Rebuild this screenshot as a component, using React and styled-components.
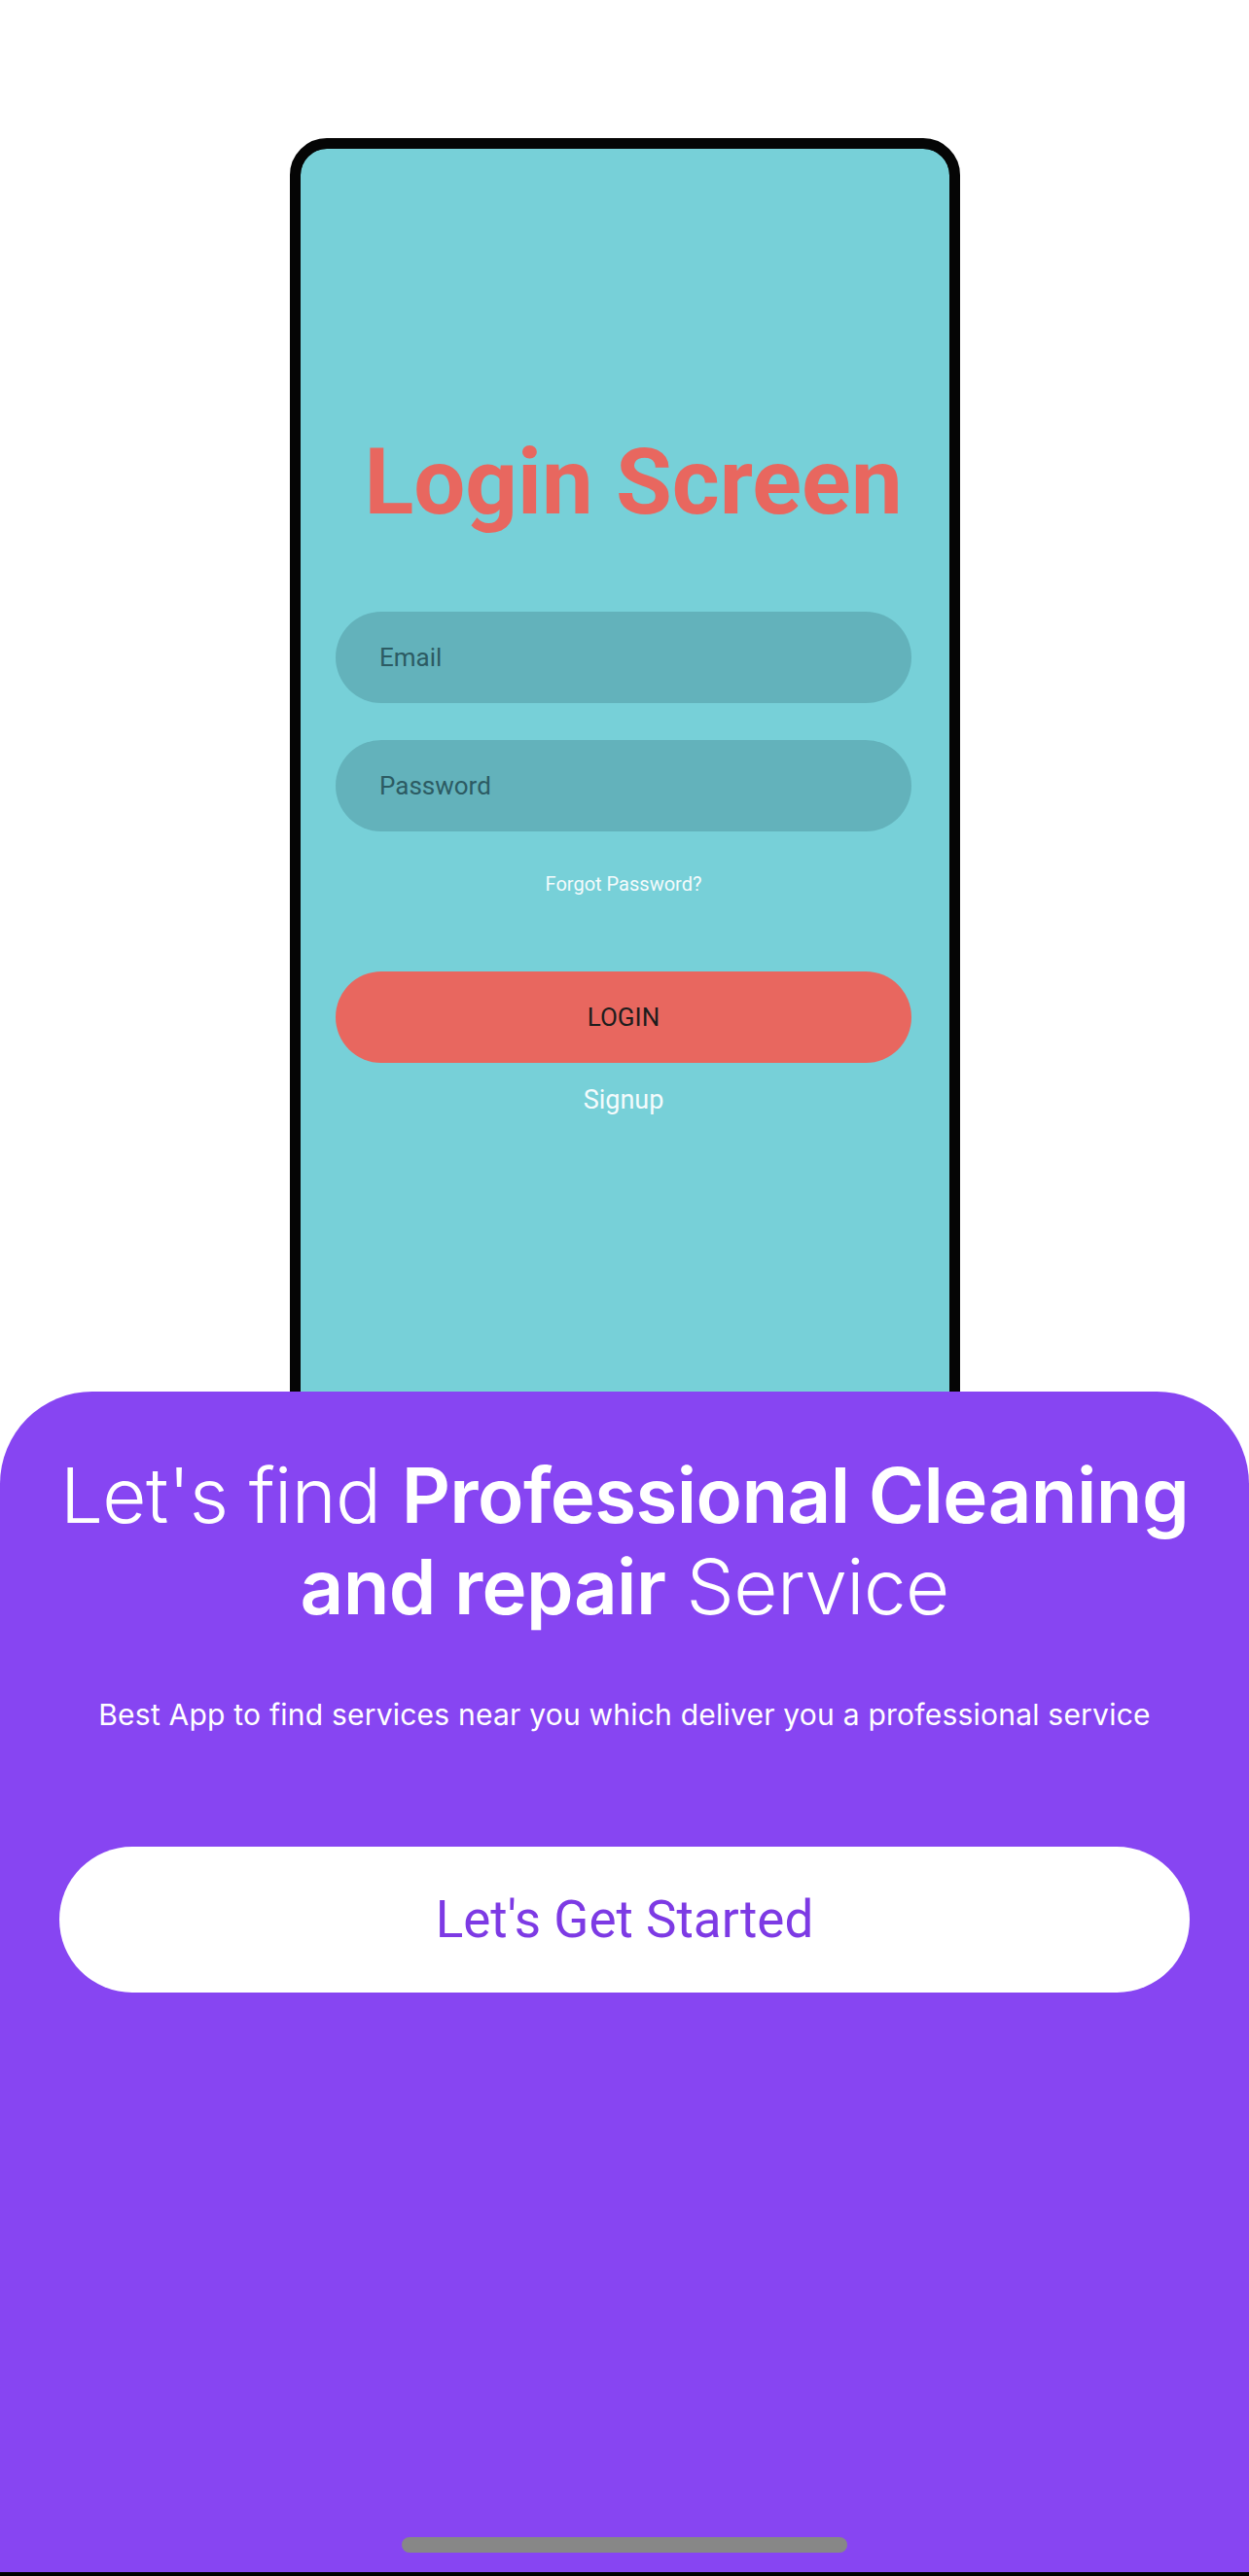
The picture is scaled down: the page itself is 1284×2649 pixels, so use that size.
import styled, { createGlobalStyle } from "styled-components";

const GlobalStyle = createGlobalStyle`
  * { box-sizing: border-box; }
  html, body { margin: 0; padding: 0; background: #ffffff; }
  body { font-family: "Inter", "Roboto", sans-serif; }
`;

const App = () => {
  return (
    <>
      <GlobalStyle />
      <Page>
        <Hero>
          <Phone>
            <Screen>
              <LoginTitle>Login Screen</LoginTitle>
              <Field>Email</Field>
              <Field>Password</Field>
              <Forgot>Forgot Password?</Forgot>
              <LoginButton>LOGIN</LoginButton>
              <Signup>Signup</Signup>
            </Screen>
          </Phone>
        </Hero>
        <Sheet>
          <Heading>
            Let's find <strong>Professional Cleaning</strong>
            <br />
            <strong>and repair</strong> Service
          </Heading>
          <Subtitle>
            Best App to find services near you which deliver you a professional service
          </Subtitle>
          <StartButton>Let's Get Started</StartButton>
          <Spacer />
          <HomeBar />
        </Sheet>
        <BottomEdge />
      </Page>
    </>
  );
};

export default App;

const Page = styled.div`
  display: flex;
  flex-direction: column;
  width: 1284px;
  min-height: 2649px;
`;

const Hero = styled.div`
  height: 1431px;
  overflow: hidden;
  display: flex;
  justify-content: center;
  padding-top: 142px;
  padding-left: 1px;
`;

const Phone = styled.div`
  width: 689px;
  height: 1400px;
  border: 11px solid #050505;
  border-radius: 38px;
  background: #050505;
  overflow: hidden;
  flex-shrink: 0;
`;

const Screen = styled.div`
  height: 100%;
  background: #77d0d8;
  border-radius: 27px;
  display: flex;
  flex-direction: column;
  align-items: stretch;
  padding: 296px 39px 0 36px;
  font-family: "Roboto", "Liberation Sans", sans-serif;
`;

const LoginTitle = styled.h1`
  margin: 0 0 86px;
  padding-left: 20px;
  font-size: 94px;
  line-height: 94px;
  font-weight: 700;
  color: #e8675f;
  text-align: center;
  white-space: nowrap;
`;

const Field = styled.div`
  height: 94px;
  border-radius: 47px;
  background: #63b2bb;
  display: flex;
  align-items: center;
  padding-left: 45px;
  font-size: 26px;
  color: #2c5b63;
  & + & {
    margin-top: 38px;
  }
`;

const Forgot = styled.div`
  margin-top: 40px;
  height: 28px;
  line-height: 28px;
  text-align: center;
  font-size: 20px;
  color: #f4fbfc;
`;

const LoginButton = styled.div`
  margin-top: 76px;
  height: 94px;
  border-radius: 47px;
  background: #e8675f;
  display: flex;
  align-items: center;
  justify-content: center;
  font-size: 26px;
  color: #1d1d1d;
`;

const Signup = styled.div`
  margin-top: 20px;
  height: 36px;
  line-height: 36px;
  text-align: center;
  font-size: 27px;
  color: #f4fbfc;
`;

const Sheet = styled.div`
  flex: 1;
  background: #8745f2;
  border-radius: 95px 95px 0 0;
  display: flex;
  flex-direction: column;
  align-items: center;
  padding: 0 40px;
  color: #ffffff;
`;

const Heading = styled.h2`
  margin: 60px 0 0;
  font-family: "Inter", sans-serif;
  font-size: 78px;
  line-height: 94px;
  font-weight: 300;
  text-align: center;
  letter-spacing: -0.6px;
  white-space: nowrap;

  strong {
    font-weight: 600;
  }
`;

const Subtitle = styled.p`
  margin: 66px 0 0;
  font-family: "Inter", sans-serif;
  font-size: 30px;
  line-height: 36px;
  font-weight: 400;
  letter-spacing: 0.22px;
  text-align: center;
  white-space: nowrap;
`;

const StartButton = styled.button`
  margin-top: 118px;
  width: 1162px;
  height: 150px;
  border: none;
  border-radius: 75px;
  background: #ffffff;
  color: #7d3ae4;
  font-family: "Roboto", "Liberation Sans", sans-serif;
  font-size: 53px;
  cursor: pointer;
`;

const Spacer = styled.div`
  flex: 1;
`;

const HomeBar = styled.div`
  width: 458px;
  height: 16px;
  border-radius: 8px;
  background: #878787;
  margin-bottom: 20px;
`;

const BottomEdge = styled.div`
  height: 4px;
  background: #000000;
`;
